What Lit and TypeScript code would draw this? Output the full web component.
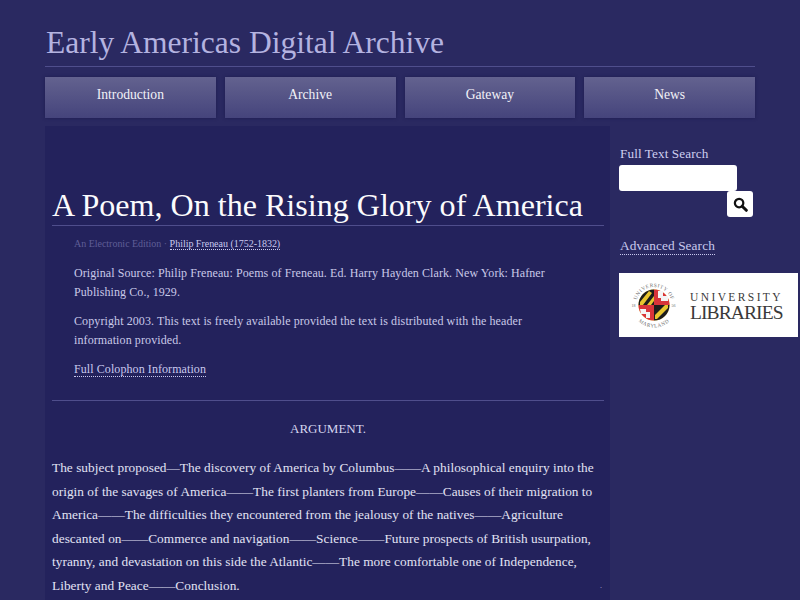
import { LitElement, html, css } from "lit";
import { customElement } from "lit/decorators.js";

@customElement("app-root")
export class AppRoot extends LitElement {
  static styles = css`
    :host {
      display: block;
      width: 800px;
      height: 600px;
      overflow: hidden;
      background: #2a2961;
      font-family: "Liberation Serif", serif;
      color: #fff;
    }
    .page {
      padding: 24px 45px 0 45px;
      display: flex;
      flex-direction: column;
    }
    .site-title {
      margin: 0;
      height: 42px;
      font-size: 31.5px;
      line-height: 38px;
      font-weight: 400;
      padding-left: 1px;
      color: #b4b3e0;
      border-bottom: 1px solid #4f4e8c;
    }
    nav {
      display: grid;
      grid-template-columns: repeat(4, 1fr);
      gap: 9px;
      margin-top: 10px;
    }
    nav a {
      height: 41px;
      display: flex;
      align-items: center;
      justify-content: center;
      padding-bottom: 6px;
      box-sizing: border-box;
      font-size: 13.6px;
      color: #f2f2f8;
      background: linear-gradient(#63628f, #45447c);
      box-shadow: 0 0 3px #1d1c50;
    }
    .columns {
      display: flex;
      margin-top: 8px;
    }
    main {
      flex: none;
      width: 565px;
      height: 480px;
      box-sizing: border-box;
      padding: 60px 6px 0 7px;
      background: #23225c;
    }
    h1 {
      margin: 0;
      font-size: 32.1px;
      line-height: 38px;
      height: 39px;
      font-weight: 400;
      white-space: nowrap;
      color: #fbfbfd;
      border-bottom: 1px solid #4f4e8c;
    }
    .meta {
      padding: 0 40px 0 22px;
      font-size: 12px;
      color: #c9c9e8;
      letter-spacing: 0.08px;
    }
    .edition {
      margin: 8px 0 0;
      font-size: 10px;
      line-height: 16px;
      color: #5f5e96;
      letter-spacing: -0.02px;
    }
    a.dotted {
      color: #c9c9ee;
      text-decoration: none;
      border-bottom: 1px dotted #c9c9ee;
    }
    .meta p {
      line-height: 19px;
    }
    .source {
      margin: 11px 0 0;
    }
    .copy {
      margin: 10px 0 0;
      letter-spacing: 0.1px;
    }
    .colophon {
      margin: 10px 0 0;
    }
    hr {
      border: 0;
      border-top: 1px solid #4f4e8c;
      margin: 21px 0 0;
    }
    h2 {
      margin: 19px 0 0;
      font-size: 13px;
      line-height: 18px;
      font-weight: 400;
      text-align: center;
      color: #d5d5ee;
    }
    .argument {
      margin: 18px 0 0;
      font-size: 13.3px;
      line-height: 23.6px;
      letter-spacing: 0.04px;
      color: #e2e2f4;
    }
    .mark {
      float: right;
      padding-right: 2px;
      font-size: 8px;
      color: #b4b4dc;
    }
    aside {
      flex: none;
      width: 136px;
      padding: 19px 0 0 9px;
    }
    .label {
      font-size: 13.2px;
      line-height: 17px;
      color: #cfcff0;
      letter-spacing: 0.1px;
      padding-left: 1px;
    }
    .search {
      display: flex;
      flex-direction: column;
      align-items: flex-start;
      margin-top: 3px;
    }
    .search input {
      width: 118px;
      height: 26px;
      box-sizing: border-box;
      border: 0;
      border-radius: 3px;
      background: #fff;
      padding: 0;
    }
    .search button {
      width: 26px;
      height: 26px;
      margin-left: 108px;
      border: 0;
      border-radius: 3px;
      background: #fff;
      padding: 0;
      display: flex;
      align-items: center;
      justify-content: center;
    }
    .adv {
      display: inline-block;
      margin: 21px 0 0 1px;
      font-size: 13.3px;
      line-height: 16px;
      letter-spacing: 0.1px;
    }
    .logo {
      width: 179px;
      height: 64px;
      margin-top: 18px;
      background: #fff;
      display: flex;
      align-items: center;
      box-sizing: border-box;
      padding-left: 11px;
      gap: 12px;
      color: #3a3a3a;
    }
    .logo-text {
      display: flex;
      flex-direction: column;
      align-items: stretch;
    }
    .u {
      font-size: 11.5px;
      letter-spacing: 2.4px;
      line-height: 14px;
    }
    .l {
      font-size: 19.5px;
      line-height: 17px;
      letter-spacing: -0.9px;
    }
  `;

  render() {
    return html`
      <div class="page">
        <h3 class="site-title">Early Americas Digital Archive</h3>
        <nav>
          <a>Introduction</a><a>Archive</a><a>Gateway</a><a>News</a>
        </nav>
        <div class="columns">
          <main>
            <h1>A Poem, On the Rising Glory of America</h1>
            <div class="meta">
              <p class="edition">An Electronic Edition · <a class="dotted">Philip Freneau (1752-1832)</a></p>
              <p class="source">Original Source: Philip Freneau: Poems of Freneau. Ed. Harry Hayden Clark. New York: Hafner Publishing Co., 1929.</p>
              <p class="copy">Copyright 2003. This text is freely available provided the text is distributed with the header information provided.</p>
              <p class="colophon"><a class="dotted">Full Colophon Information</a></p>
            </div>
            <hr />
            <h2>ARGUMENT.</h2>
            <p class="argument">The subject proposed—The discovery of America by Columbus——A philosophical enquiry into the origin of the savages of America——The first planters from Europe——Causes of their migration to America——The difficulties they encountered from the jealousy of the natives——Agriculture descanted on——Commerce and navigation——Science——Future prospects of British usurpation, tyranny, and devastation on this side the Atlantic——The more comfortable one of Independence, Liberty and Peace——Conclusion.<span class="mark">.</span></p>
          </main>
          <aside>
            <div class="label">Full Text Search</div>
            <div class="search">
              <input type="text" aria-label="Full Text Search" />
              <button aria-label="Search">
                <svg width="15" height="15" viewBox="0 0 16 16">
                  <circle cx="6.5" cy="6.5" r="4.5" fill="none" stroke="#111" stroke-width="2.4" />
                  <path d="M9.8 9.8 L14.2 14.2" stroke="#111" stroke-width="3.2" stroke-linecap="round" />
                </svg>
              </button>
            </div>
            <a class="dotted adv">Advanced Search</a>
            <div class="logo">
              <svg width="48" height="48" viewBox="0 0 48 48">
                <defs>
                  <path id="arcT" d="M6 24 A18 18 0 0 1 42 24" />
                  <path id="arcB" d="M1.5 24 A22.5 22.5 0 0 0 46.5 24" />
                </defs>
                <circle cx="24" cy="24" r="15.5" fill="#e8c52e" />
                <path d="M24 8.5 A15.5 15.5 0 0 1 39.5 24 H24 Z" fill="#d8343a" />
                <path d="M24 39.5 A15.5 15.5 0 0 1 8.5 24 H24 Z" fill="#d8343a" />
                <path d="M8.5 24 A15.5 15.5 0 0 1 24 8.5 V24 Z" fill="#1c1c1c" />
                <path d="M10 21 L19 10 L22 12 L13 24 H10 Z M17 24 L24 15 V20 L21 24 Z" fill="#e8c52e" />
                <path d="M24 39.5 A15.5 15.5 0 0 0 39.5 24 H24 Z" fill="#1c1c1c" />
                <path d="M27 38 L38 27 L38 24 H35 L25 34 V38 Z" fill="#e8c52e" />
                <path d="M28 10 h5 v5 h5 v5 h-7 v-3 h-3 Z" fill="#f4f4f4" />
                <path d="M10 28 h6 v3 h4 v6 h-4 v-4 h-5 Z" fill="#f4f4f4" />
                <text font-size="5.2" fill="#666" font-family="Liberation Serif" letter-spacing="0.55" text-anchor="middle"><textPath href="#arcT" startOffset="50%">UNIVERSITY OF</textPath></text>
                <text font-size="5.2" fill="#666" font-family="Liberation Serif" letter-spacing="0.55" text-anchor="middle"><textPath href="#arcB" startOffset="50%">MARYLAND</textPath></text>
                <text x="1.5" y="26" font-size="4" fill="#666" font-family="Liberation Serif">18</text>
                <text x="41.5" y="26" font-size="4" fill="#666" font-family="Liberation Serif">56</text>
              </svg>
              <div class="logo-text">
                <span class="u">UNIVERSITY</span>
                <span class="l">LIBRARIES</span>
              </div>
            </div>
          </aside>
        </div>
      </div>
    `;
  }
}
